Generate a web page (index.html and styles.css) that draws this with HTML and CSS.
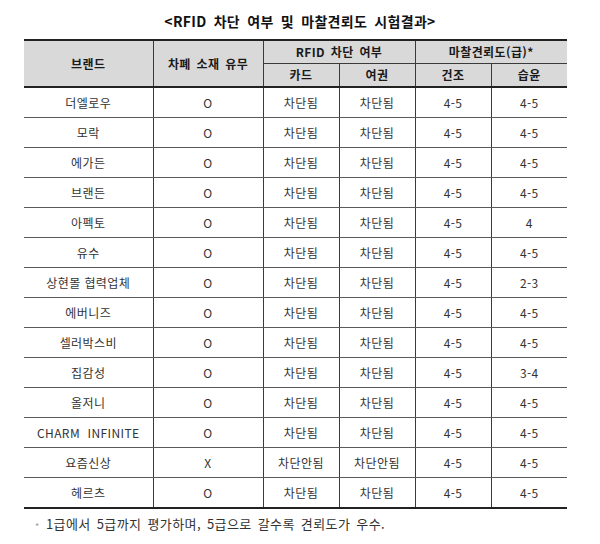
FILE: index.html
```html
<!DOCTYPE html>
<html lang="ko">
<head>
<meta charset="utf-8">
<link rel="stylesheet" href="styles.css">
</head>
<body>
<div class="page">
  <div class="title">&lt;RFID 차단 여부 및 마찰견뢰도 시험결과&gt;</div>
  <table class="results">
    <colgroup>
      <col class="c-brand"><col class="c-cash"><col class="c-n"><col class="c-n"><col class="c-n"><col class="c-n">
    </colgroup>
    <thead>
      <tr class="h1">
        <th rowspan="2">브랜드</th>
        <th rowspan="2">차폐 소재 유무</th>
        <th colspan="2">RFID 차단 여부</th>
        <th colspan="2" class="gl">마찰견뢰도(급)*</th>
      </tr>
      <tr class="h2">
        <th>카드</th>
        <th>여권</th>
        <th class="gl">건조</th>
        <th>습윤</th>
      </tr>
    </thead>
    <tbody>
      <tr><td>더엘로우</td><td>O</td><td>차단됨</td><td>차단됨</td><td class="gl">4-5</td><td>4-5</td></tr>
      <tr><td>모락</td><td>O</td><td>차단됨</td><td>차단됨</td><td class="gl">4-5</td><td>4-5</td></tr>
      <tr><td>에가든</td><td>O</td><td>차단됨</td><td>차단됨</td><td class="gl">4-5</td><td>4-5</td></tr>
      <tr><td>브랜든</td><td>O</td><td>차단됨</td><td>차단됨</td><td class="gl">4-5</td><td>4-5</td></tr>
      <tr><td>아펙토</td><td>O</td><td>차단됨</td><td>차단됨</td><td class="gl">4-5</td><td>4</td></tr>
      <tr><td>유수</td><td>O</td><td>차단됨</td><td>차단됨</td><td class="gl">4-5</td><td>4-5</td></tr>
      <tr><td>상현몰 협력업체</td><td>O</td><td>차단됨</td><td>차단됨</td><td class="gl">4-5</td><td>2-3</td></tr>
      <tr><td>에버니즈</td><td>O</td><td>차단됨</td><td>차단됨</td><td class="gl">4-5</td><td>4-5</td></tr>
      <tr><td>셀러박스비</td><td>O</td><td>차단됨</td><td>차단됨</td><td class="gl">4-5</td><td>4-5</td></tr>
      <tr><td>집감성</td><td>O</td><td>차단됨</td><td>차단됨</td><td class="gl">4-5</td><td>3-4</td></tr>
      <tr><td>올저니</td><td>O</td><td>차단됨</td><td>차단됨</td><td class="gl">4-5</td><td>4-5</td></tr>
      <tr><td>CHARM&nbsp; INFINITE</td><td>O</td><td>차단됨</td><td>차단됨</td><td class="gl">4-5</td><td>4-5</td></tr>
      <tr><td>요즘신상</td><td>X</td><td>차단안됨</td><td>차단안됨</td><td class="gl">4-5</td><td>4-5</td></tr>
      <tr><td>헤르츠</td><td>O</td><td>차단됨</td><td>차단됨</td><td class="gl">4-5</td><td>4-5</td></tr>
    </tbody>
  </table>
  <div class="note"><span class="mark">*</span>1급에서 5급까지 평가하며, 5급으로 갈수록 견뢰도가 우수.</div>
</div>
</body>
</html>
```

FILE: styles.css
```css
html, body {
  margin: 0;
  padding: 0;
  background: #ffffff;
}

.page {
  width: 600px;
  height: 544px;
  font-family: "Noto Sans CJK KR", "Noto Sans", sans-serif;
  color: #333333;
}

.title {
  height: 39px;
  box-sizing: border-box;
  padding-top: 9px;
  line-height: 24px;
  font-size: 14px;
  font-weight: bold;
  text-align: center;
  color: #111111;
  letter-spacing: 0.3px;
  word-spacing: 3px;
}

.results {
  margin-left: 24px;
  width: 543px;
  table-layout: fixed;
  border-collapse: collapse;
  font-size: 12px;
  letter-spacing: 0.4px;
}

.c-brand { width: 129px; }
.c-cash { width: 110px; }
.c-n { width: 76px; }

.results th,
.results td {
  padding: 0;
  text-align: center;
  vertical-align: middle;
  border: 1px solid #3a3a3a;
  line-height: 16px;
  white-space: nowrap;
}

.results th:first-child,
.results td:first-child {
  border-left: none;
}

.results th:last-child,
.results td:last-child {
  border-right: none;
}

.results thead th {
  background: #d9d9d9;
  font-weight: bold;
  color: #1a1a1a;
  font-size: 12px;
  word-spacing: 2px;
}

.results thead tr.h1 th {
  border-top: 2px solid #222222;
  height: 22px;
}

.results thead tr.h2 th {
  border-bottom: 2px solid #222222;
  height: 22px;
}

.results thead tr.h1 th[rowspan] {
  border-bottom: 2px solid #222222;
}

.results tbody td {
  height: 29px;
  border-top-color: #5a5a5a;
  border-bottom-color: #5a5a5a;
}

.results tbody tr:last-child td {
  border-bottom: 2px solid #222222;
}

.results .gl {
  border-left-color: #777777;
}

.note {
  margin-top: 6px;
  padding-left: 35px;
  font-size: 13px;
  line-height: 18px;
  color: #333333;
  letter-spacing: 0.4px;
  word-spacing: 2px;
}

.note .mark {
  display: inline-block;
  width: 11px;
  font-size: 9px;
  line-height: 9px;
  vertical-align: -1px;
  color: #999999;
}
```
